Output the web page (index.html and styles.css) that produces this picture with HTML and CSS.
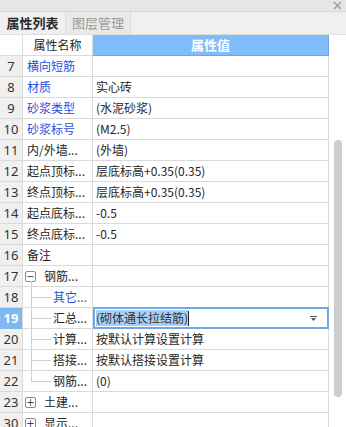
FILE: index.html
```html
<!DOCTYPE html>
<html lang="zh-CN">
<head>
  <meta charset="UTF-8">
  <title>属性列表</title>
  <link rel="stylesheet" href="styles.css">
</head>
<body>
  <div class="panel">
    <!-- Title strip -->
    <div class="titlebar">
      <svg class="close" width="9" height="9" viewBox="0 0 9 9">
        <path d="M1 1 L8 8 M8 1 L1 8" stroke="#9a9a9a" stroke-width="1.4" fill="none"/>
      </svg>
    </div>

    <!-- Tabs -->
    <div class="tabs">
      <div class="tab active">属性列表</div>
      <div class="tab">图层管理</div>
    </div>

    <div class="content">
      <div class="grid">
        <div class="row head">
          <div class="num"></div>
          <div class="name">属性名称</div>
          <div class="value">属性值</div>
        </div>

        <div class="row"><div class="num">7</div><div class="name blue">横向短筋</div><div class="value"></div></div>
        <div class="row"><div class="num">8</div><div class="name blue">材质</div><div class="value">实心砖</div></div>
        <div class="row"><div class="num">9</div><div class="name blue">砂浆类型</div><div class="value">(水泥砂浆)</div></div>
        <div class="row"><div class="num">10</div><div class="name blue">砂浆标号</div><div class="value">(M2.5)</div></div>
        <div class="row"><div class="num">11</div><div class="name">内/外墙...</div><div class="value">(外墙)</div></div>
        <div class="row"><div class="num">12</div><div class="name">起点顶标...</div><div class="value">层底标高+0.35(0.35)</div></div>
        <div class="row"><div class="num">13</div><div class="name">终点顶标...</div><div class="value">层底标高+0.35(0.35)</div></div>
        <div class="row"><div class="num">14</div><div class="name">起点底标...</div><div class="value">-0.5</div></div>
        <div class="row"><div class="num">15</div><div class="name">终点底标...</div><div class="value">-0.5</div></div>
        <div class="row"><div class="num">16</div><div class="name">备注</div><div class="value"></div></div>
        <div class="row"><div class="num">17</div><div class="name group open"><span class="toggle">−</span>钢筋...</div><div class="value"></div></div>
        <div class="row"><div class="num">18</div><div class="name child blue">其它...</div><div class="value"></div></div>
        <div class="row current">
          <div class="num">19</div>
          <div class="name child">汇总...</div>
          <div class="value editing">
            <span class="sel">(砌体通长拉结筋)</span><span class="caret"></span>
            <svg class="drop" width="7" height="5" viewBox="0 0 7 5">
              <path d="M0 0 H7 V1 H0 Z M1 2 H6 L3.5 5 Z" fill="#555"/>
            </svg>
          </div>
        </div>
        <div class="row"><div class="num">20</div><div class="name child">计算...</div><div class="value">按默认计算设置计算</div></div>
        <div class="row"><div class="num">21</div><div class="name child">搭接...</div><div class="value">按默认搭接设置计算</div></div>
        <div class="row"><div class="num">22</div><div class="name child last">钢筋...</div><div class="value">(0)</div></div>
        <div class="row"><div class="num">23</div><div class="name group"><span class="toggle">+</span>土建...</div><div class="value"></div></div>
        <div class="row"><div class="num">30</div><div class="name group"><span class="toggle">+</span>显示...</div><div class="value"></div></div>
      </div>

      <div class="scroll">
        <div class="thumb"></div>
      </div>
    </div>
  </div>
</body>
</html>
```

FILE: styles.css
```css
/* General */
html, body {
  margin: 0;
  padding: 0;
}

body {
  font-family: "Noto Sans CJK SC", "Noto Sans", sans-serif;
  font-size: 12px;
  color: #262626;
  background: #ffffff;
  overflow: hidden;
}

.panel {
  width: 346px;
  height: 427px;
  overflow: hidden;
}

/* Title strip */
.titlebar {
  height: 11px;
  background: #e6e6e6;
  border-bottom: 1px solid #d4d4d4;
  display: flex;
  justify-content: flex-end;
  align-items: center;
  padding-right: 4px;
}

/* Tabs */
.tabs {
  height: 22px;
  background: #f0f0f0;
  border-bottom: 1px solid #dedede;
  display: flex;
}

.tab {
  width: 64px;
  line-height: 22px;
  text-align: center;
  font-size: 13px;
  color: #9b9b9b;
  background: #e9e9e9;
  border-right: 1px solid #dcdcdc;
}

.tab.active {
  background: #f0f0f0;
  color: #2a2a2a;
  font-weight: bold;
  width: 65px;
}

/* Property grid */
.content {
  display: flex;
}

.grid {
  width: 329px;
}

.row {
  display: grid;
  grid-template-columns: 23px 70px 236px;
  height: 21px;
  box-sizing: border-box;
  border-bottom: 1px solid #dadada;
}

.row > div {
  box-sizing: border-box;
  border-right: 1px solid #dadada;
  line-height: 20px;
  white-space: nowrap;
  overflow: hidden;
}

.num {
  background: #f0f0f0;
  text-align: center;
  font-family: "Noto Sans", sans-serif;
  font-size: 13px;
  color: #333;
}

.name {
  padding-left: 4px;
  position: relative;
}

.value {
  padding-left: 3px;
  position: relative;
}

.blue {
  color: #1f4fe0;
}

/* Header */
.head .num {
  background: #ffffff;
}

.head .name {
  text-align: center;
  padding-left: 0;
}

.head .value {
  background: #80bcf9;
  border-right: 1px solid #6aa6e8;
  border-bottom: 1px solid #6aa6e8;
  color: #ffffff;
  font-weight: bold;
  text-align: center;
  font-size: 13px;
  padding-left: 0;
}

.row.head > .value {
  margin-bottom: -1px;
  height: 21px;
}

/* Tree */
.group {
  display: flex;
  align-items: center;
  padding-left: 2px;
}

.toggle {
  width: 9px;
  height: 9px;
  border: 1px solid #8a8a8a;
  border-radius: 2px;
  font-size: 10px;
  line-height: 9px;
  text-align: center;
  color: #444;
  margin-right: 8px;
  font-family: "DejaVu Sans", sans-serif;
  background: #fff;
}

.group.open::after {
  content: "";
  position: absolute;
  left: 8px;
  top: 15px;
  bottom: -1px;
  border-left: 1px solid #cfcfcf;
}

.child {
  padding-left: 30px;
}

.child::before {
  content: "";
  position: absolute;
  left: 8px;
  top: -1px;
  bottom: -1px;
  border-left: 1px solid #cfcfcf;
}

.child.last::before {
  bottom: 10px;
}

.child::after {
  content: "";
  position: absolute;
  left: 8px;
  top: 10px;
  width: 20px;
  border-top: 1px solid #cfcfcf;
}

/* Current row */
.current .num {
  background: #7fb8f0;
  color: #ffffff;
  font-weight: bold;
}

.value.editing {
  border: 2px solid #6ea9e6;
  margin-top: -1px;
  height: 22px;
  line-height: 18px;
  padding-left: 1px;
  display: flex;
  align-items: center;
}

.sel {
  background: #a9cff5;
  line-height: 16px;
  color: #333;
}

.caret {
  width: 1px;
  height: 15px;
  background: #222;
}

.drop {
  margin-left: auto;
  margin-right: 10px;
}

/* Scrollbar */
.scroll {
  width: 17px;
  padding-top: 105px;
  display: flex;
  justify-content: center;
  align-items: flex-start;
}

.thumb {
  width: 8px;
  height: 257px;
  background: #cdcdcd;
  border-radius: 4px;
}
```
